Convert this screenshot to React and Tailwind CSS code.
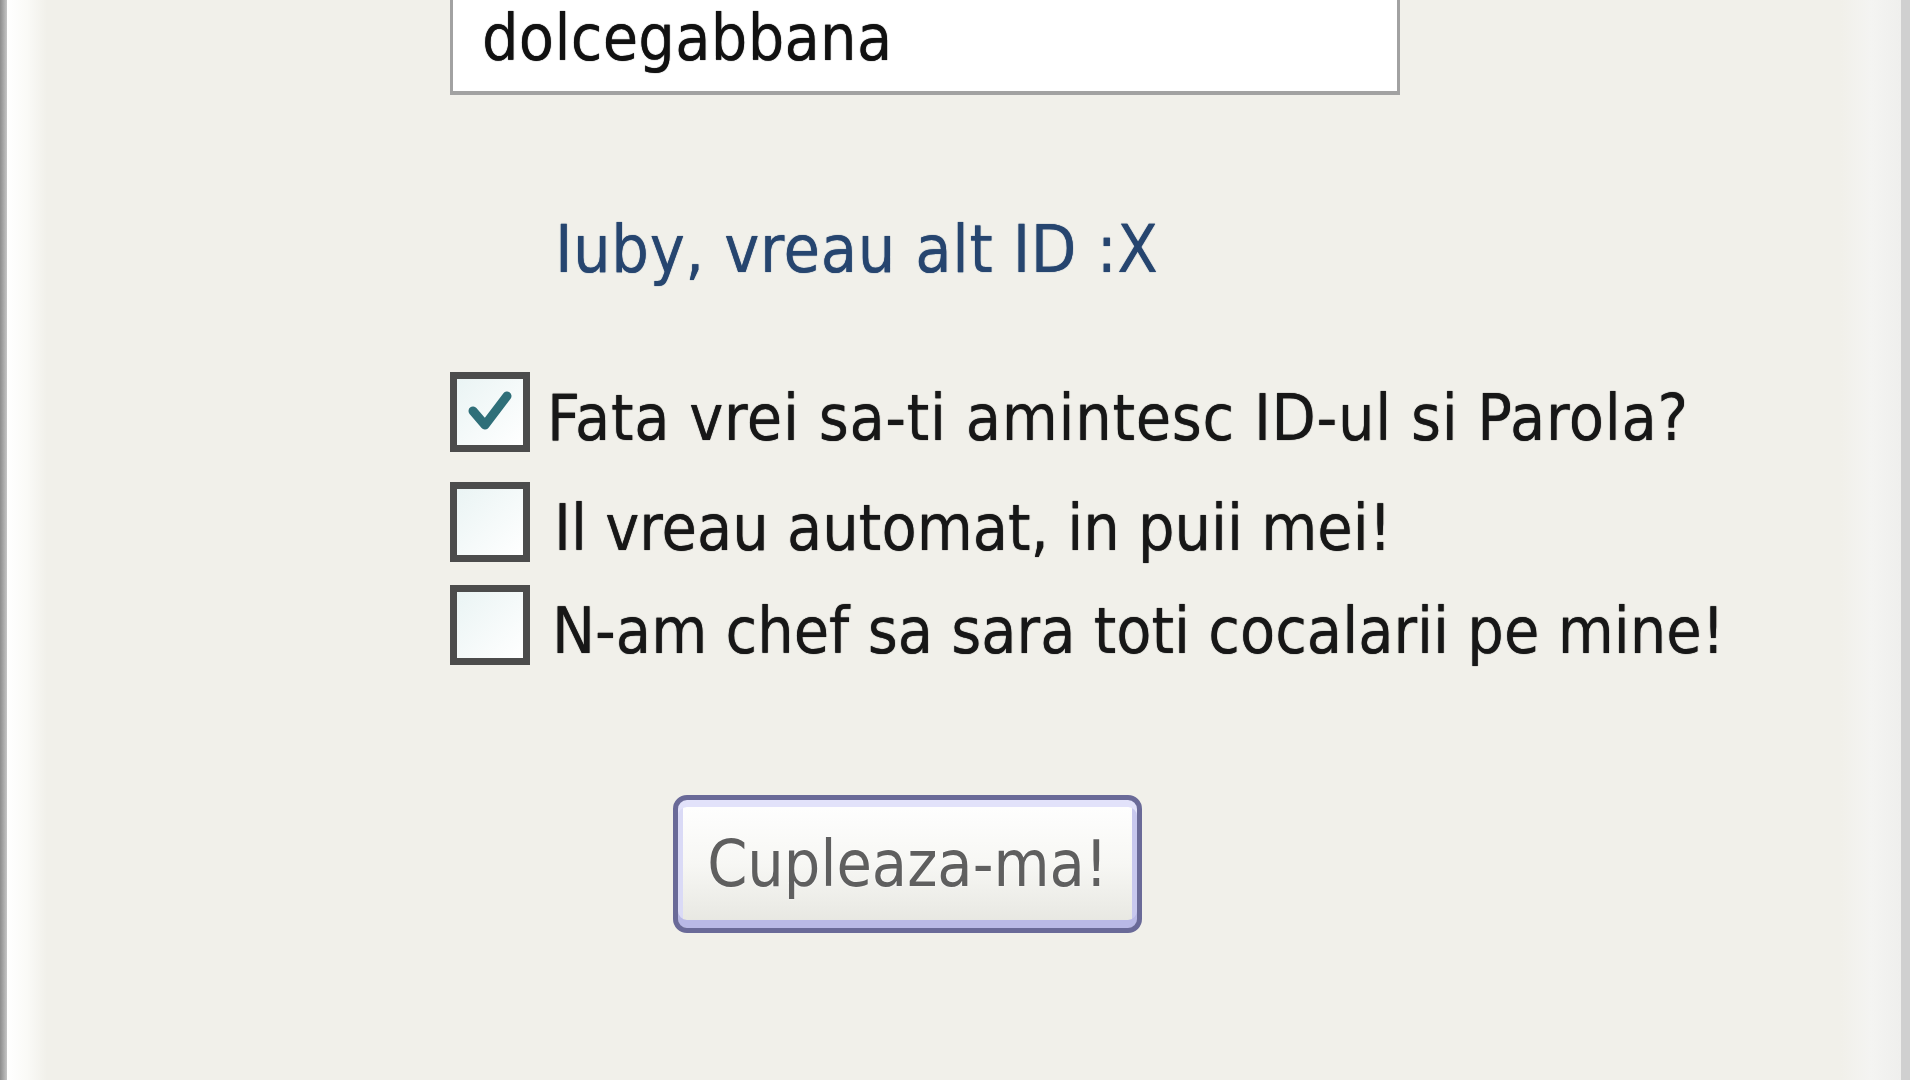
import React from 'react';

const font = "font-['DejaVu_Sans_Condensed','DejaVu_Sans',sans-serif]";
// the reference is an upscaled XP screenshot, strokes look a bit heavier
const heavy = '[text-shadow:0_0_1px_currentColor]';

const Checkbox = ({ checked }) => (
  <div className="w-[80px] h-[80px] shrink-0 border-[7px] border-[#4c4c4c] bg-gradient-to-br from-[#eaf4f4] to-white flex items-center justify-center">
    {checked && (
      <svg width="52" height="52" viewBox="0 0 52 52">
        <polyline points="9,25 21,39 43,10" fill="none" stroke="#2f6f79" strokeWidth="9" strokeLinecap="round" strokeLinejoin="round" />
      </svg>
    )}
  </div>
);

const Option = ({ checked, label, className, textClass }) => (
  <div className={`flex items-start ${className}`}>
    <Checkbox checked={checked} />
    <span className={`mt-[14px] text-[64px] leading-[64px] text-[#171717] whitespace-nowrap ${heavy} ${textClass}`}>{label}</span>
  </div>
);

export default function App() {
  return (
    <div className={`flex h-screen w-full overflow-hidden bg-[#f1f0ea] ${font}`}>
      {/* left window edge */}
      <div className="w-[7px] shrink-0 bg-gradient-to-r from-[#8c8c8c] to-[#c6c6c6]" />
      <div className="w-[40px] shrink-0 bg-gradient-to-r from-white via-[#fafaf7] to-[#f1f0ea]" />

      <main className="flex-1 flex flex-col pl-[403px]">
        {/* ID field, top cut off */}
        <div className="w-[950px] h-[95px] bg-white border-x-[3px] border-b-[4px] border-[#a2a2a2] pl-[29px] pt-[6px]">
          <span className={`text-[64px] leading-[64px] tracking-[0.3px] text-[#111] ${heavy}`}>dolcegabbana</span>
        </div>

        <a className={`mt-[122px] ml-[105px] text-[66px] leading-[66px] tracking-[0.6px] text-[#26456f] whitespace-nowrap ${heavy}`}>
          Iuby, vreau alt ID :X
        </a>

        <Option className="mt-[89px]" checked label="Fata vrei sa-ti amintesc ID-ul si Parola?" textClass="ml-[17px] tracking-[0.7px]" />
        <Option className="mt-[30px]" label="Il vreau automat, in puii mei!" textClass="ml-[24px]" />
        <Option className="mt-[23px]" label="N-am chef sa sara toti cocalarii pe mine!" textClass="ml-[22px]" />

        <button className="mt-[130px] ml-[223px] w-[469px] h-[138px] rounded-[14px] border-[5px] border-[#6a6a98] bg-gradient-to-b from-white via-[#f7f7f4] to-[#e6e6e0] shadow-[inset_0_7px_0_#e2e2fa,inset_0_-8px_0_#b9b9e6,inset_5px_0_0_#dadaf6,inset_-5px_0_0_#c8c8ee] flex items-center justify-center">
          <span className="text-[64px] leading-[64px] text-[#5f5f5f] [text-shadow:0_0_2px_#ffffff]">Cupleaza-ma!</span>
        </button>
      </main>

      {/* right window edge */}
      <div className="w-[60px] shrink-0 bg-gradient-to-r from-[#f1f0ea] via-[#f4f4f2] to-[#efefed]" />
      <div className="w-[9px] shrink-0 bg-[#d0d0d0]" />
      <div className="w-[10px] shrink-0 bg-white" />
    </div>
  );
}
